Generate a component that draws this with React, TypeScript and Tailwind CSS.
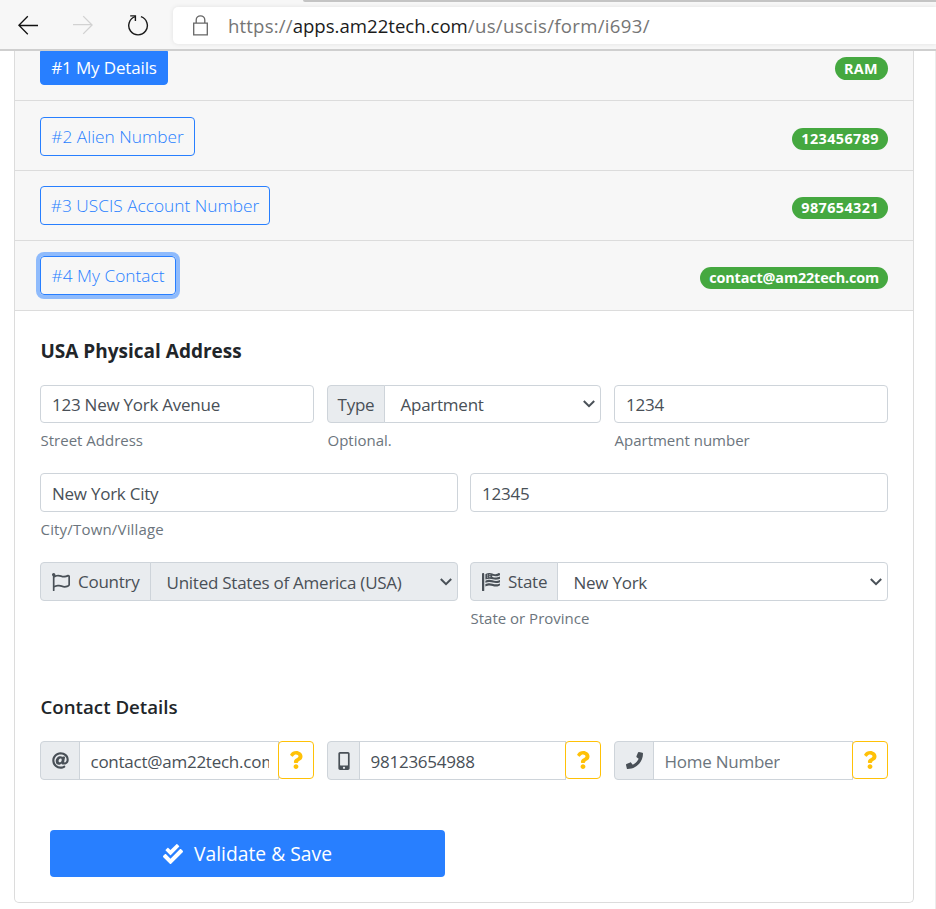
import { useState, type ReactNode } from 'react'
import { FaAt, FaCheckDouble, FaFlagUsa, FaMobileAlt, FaPhone, FaQuestion, FaRegFlag } from 'react-icons/fa'

const inputText = 'text-[17px] tracking-[-0.25px] text-[#495057]'

function BrowserBar() {
  return (
    <header className="relative z-10 flex h-[51px] shrink-0 items-start border-b-2 border-[#cfcfcf] bg-[#f7f7f7]">
      {/* Edge of the tab strip */}
      <div className="absolute top-0 right-0 h-[2px] w-[633px] rounded-bl bg-[#c4c4c4]" />

      <svg className="mt-[15px] ml-[18px] h-5 w-5" viewBox="0 0 20 20" fill="none" stroke="#111" strokeWidth="1.3">
        <path d="M20 10.5H1M9.8 1.3.9 10.3l8.9 8.9" />
      </svg>
      <svg className="mt-[15px] ml-[35px] h-5 w-5" viewBox="0 0 20 20" fill="none" stroke="#d2d2d2" strokeWidth="1.3">
        <path d="M0 9.7h19M10.2 1.1l8.9 8.9-8.9 8.9" />
      </svg>
      <svg className="mt-[14px] ml-[34px] h-[23px] w-[22px]" viewBox="0 0 22 23" fill="none" stroke="#1a1a1a" strokeWidth="1.4">
        <path d="M13.9 2.7A9.3 9.3 0 1 1 8.2 2.7" />
        <path d="M3.2 1.9h5.2v5" />
      </svg>

      <div className="mt-[7px] ml-[24px] flex h-[37px] flex-1 items-center rounded-l-[5px] bg-white pl-5 shadow-[0_0_5px_rgba(0,0,0,0.09)]">
        <svg className="h-[21px] w-[15px]" viewBox="0 0 15 21" fill="none" stroke="#666" strokeWidth="1.3">
          <path d="M.7 8.2h13.6v11.6H.7zM3.2 8V5.1a4.3 4.3 0 0 1 8.6 0V8" />
        </svg>
        <div className="ml-5 pt-[2px] text-[18.6px] leading-none whitespace-nowrap text-[#757575]">
          <span className="tracking-[0.15px]">https://</span>
          <span className="text-[#1b1b1b]">apps.am22tech.com</span>
          <span className="tracking-[0.3px]">/us/uscis/form/i693/</span>
        </div>
      </div>
    </header>
  )
}

function Badge({ children, className = '' }: { children: ReactNode; className?: string }) {
  return (
    <span className={`flex h-[22px] items-center rounded-full bg-[#45a840] px-[9px] text-[14.4px] leading-none font-bold text-white ${className}`}>
      {children}
    </span>
  )
}

function Chevron() {
  return (
    <svg
      className="pointer-events-none absolute top-1/2 right-[5px] h-2 w-3 -translate-y-1/2"
      viewBox="0 0 12 8"
      fill="none"
      stroke="#495057"
      strokeWidth="2"
    >
      <path d="M.8 1 6 6.2 11.2 1" />
    </svg>
  )
}

function Addon({ children, className = '' }: { children: ReactNode; className?: string }) {
  return (
    <div className={`flex items-center rounded-l-[4px] border border-[#ced4da] bg-[#e9ecef] ${inputText} ${className}`}>
      {children}
    </div>
  )
}

function Select({ value, disabled = false }: { value: string; disabled?: boolean }) {
  return (
    <div
      className={`relative -ml-px flex flex-1 items-center rounded-r-[4px] border border-[#ced4da] pt-[2px] pl-[15.5px] ${inputText} ${
        disabled ? 'bg-[#e9ecef] tracking-[-0.18px]' : 'bg-white'
      }`}
    >
      {value}
      <Chevron />
    </div>
  )
}

function TextBox({ value, className = '' }: { value: string; className?: string }) {
  return (
    <div className={`flex items-center rounded-[4px] border border-[#ced4da] bg-white px-[11px] pt-[2px] ${inputText} ${className}`}>
      {value}
    </div>
  )
}

function Hint({ children, className = '' }: { children: ReactNode; className?: string }) {
  return <p className={`mt-[7px] pl-[0.5px] text-[15px] leading-5 text-[#6c757d] ${className}`}>{children}</p>
}

function HelpButton() {
  return (
    <button className="relative -ml-px flex h-[38px] w-9 shrink-0 items-center justify-center rounded-[4px] border border-[#ffc107] bg-white text-[#ffc107]">
      <FaQuestion className="h-[18px] w-[18px]" />
    </button>
  )
}

function ContactField({ icon, iconWidth, children }: { icon: ReactNode; iconWidth: string; children: ReactNode }) {
  return (
    <div className="flex h-[39px] min-w-0">
      <Addon className={`shrink-0 justify-center ${iconWidth}`}>{icon}</Addon>
      <div className="-ml-px flex min-w-0 flex-1 items-center border border-[#ced4da] pr-[9px] pl-[10.5px]">
        <span className="overflow-hidden pt-[2px] whitespace-nowrap">{children}</span>
      </div>
      <HelpButton />
    </div>
  )
}

const sections = [
  { id: 1, label: '#1 My Details', badge: 'RAM', width: 'w-[128px]', tracking: 'tracking-[0.3px] w-[53px]', pad: 'h-[50px] pt-0' },
  { id: 2, label: '#2 Alien Number', badge: '123456789', width: 'w-[155px]', tracking: 'tracking-[0.4px]', pad: 'h-[70px] pt-[16px]' },
  { id: 3, label: '#3 USCIS Account Number', badge: '987654321', width: 'w-[230px]', tracking: 'tracking-[0.4px]', pad: 'h-[70px] pt-[15px]' },
  { id: 4, label: '#4 My Contact', badge: 'contact@am22tech.com', width: 'w-[136px]', tracking: 'tracking-[-0.15px]', pad: 'h-[70px] pt-[15px]' },
]

export default function App() {
  const [focused, setFocused] = useState(4)

  return (
    <div className="flex h-[909px] w-[936px] flex-col overflow-hidden bg-white font-['Open_Sans',sans-serif] text-[#212529]">
      <BrowserBar />

      <div className="flex min-h-0 flex-1 justify-between border-r border-[#ececec]">
        <main className="ml-[14px] flex h-[852px] w-[900px] flex-col rounded-b-[5px] border border-t-0 border-[#dcdcdc]">
          {sections.map(s => (
            <div key={s.id} className={`flex shrink-0 items-start justify-between border-b border-[#dcdcdc] bg-[#f7f7f7] px-[25px] ${s.pad}`}>
              <button
                onClick={() => setFocused(s.id)}
                className={`flex items-center justify-center rounded-[4px] border border-[#287fff] leading-none whitespace-nowrap ${s.width} ${
                  s.id === 1
                    ? 'h-[34px] rounded-t-none bg-[#287fff] pb-[2px] text-[17px] tracking-[-0.15px] text-white'
                    : 'h-[39px] pt-px text-[17.3px] font-light text-[#287fff]'
                } ${focused === s.id ? 'shadow-[0_0_0_4px_#8fbbfc]' : ''}`}
              >
                {s.label}
              </button>
              <Badge className={`${s.tracking} ${s.id === 1 ? 'mt-[6px] h-[23px] pt-px' : 'mt-[11px]'}`}>{s.badge}</Badge>
            </div>
          ))}

          <div className="px-[25px] pt-[28px]">
            <h2 className="pl-[0.5px] text-[19px] leading-6 font-bold">USA Physical Address</h2>

            <div className="mt-[22px] grid grid-cols-3 gap-x-[13px]">
              <div>
                <TextBox value="123 New York Avenue" className="h-[38px]" />
                <Hint>Street Address</Hint>
              </div>
              <div>
                <div className="flex h-[38px]">
                  <Addon className="w-[58px] justify-center pt-[2px]">Type</Addon>
                  <Select value="Apartment" />
                </div>
                <Hint>Optional.</Hint>
              </div>
              <div>
                <TextBox value="1234" className="h-[38px]" />
                <Hint>Apartment number</Hint>
              </div>
            </div>

            <div className="mt-[23px] grid grid-cols-2 gap-x-3">
              <div>
                <TextBox value="New York City" className="h-[39px]" />
                <Hint className="tracking-[0.18px]">City/Town/Village</Hint>
              </div>
              <TextBox value="12345" className="h-[39px]" />
            </div>

            <div className="mt-[23px] grid grid-cols-2 gap-x-3">
              <div className="flex h-[39px]">
                <Addon className="w-[111px] gap-[8px] pl-[11px]">
                  <FaRegFlag className="h-[18px] w-[18px] shrink-0" />
                  Country
                </Addon>
                <Select value="United States of America (USA)" disabled />
              </div>
              <div>
                <div className="flex h-[39px]">
                  <Addon className="w-[88px] gap-[8px] pl-[11px]">
                    <FaFlagUsa className="h-[18px] w-[18px] shrink-0" />
                    State
                  </Addon>
                  <Select value="New York" />
                </div>
                <Hint>State or Province</Hint>
              </div>
            </div>

            <h2 className="mt-[67px] pl-[0.5px] text-[18.7px] leading-6 font-semibold">Contact Details</h2>

            <div className="mt-[22px] grid grid-cols-3 gap-x-[13px]">
              <ContactField icon={<FaAt className="h-[17px] w-[17px]" />} iconWidth="w-10">
                <span className={inputText}>contact@am22tech.com</span>
              </ContactField>
              <ContactField icon={<FaMobileAlt className="h-[18px] w-[18px]" />} iconWidth="w-[33px]">
                <span className={inputText}>98123654988</span>
              </ContactField>
              <ContactField icon={<FaPhone className="h-[17px] w-[17px]" />} iconWidth="w-10">
                <span className="text-[17px] tracking-[-0.25px] text-[#6c757d]">Home Number</span>
              </ContactField>
            </div>

            <button className="mt-[50px] ml-[10px] flex h-[47px] w-[395px] items-center justify-center gap-[11px] rounded-[4px] bg-[#287fff] text-[19.3px] leading-none text-white">
              <FaCheckDouble className="h-5 w-5" />
              Validate &amp; Save
            </button>
          </div>
        </main>
      </div>
    </div>
  )
}
